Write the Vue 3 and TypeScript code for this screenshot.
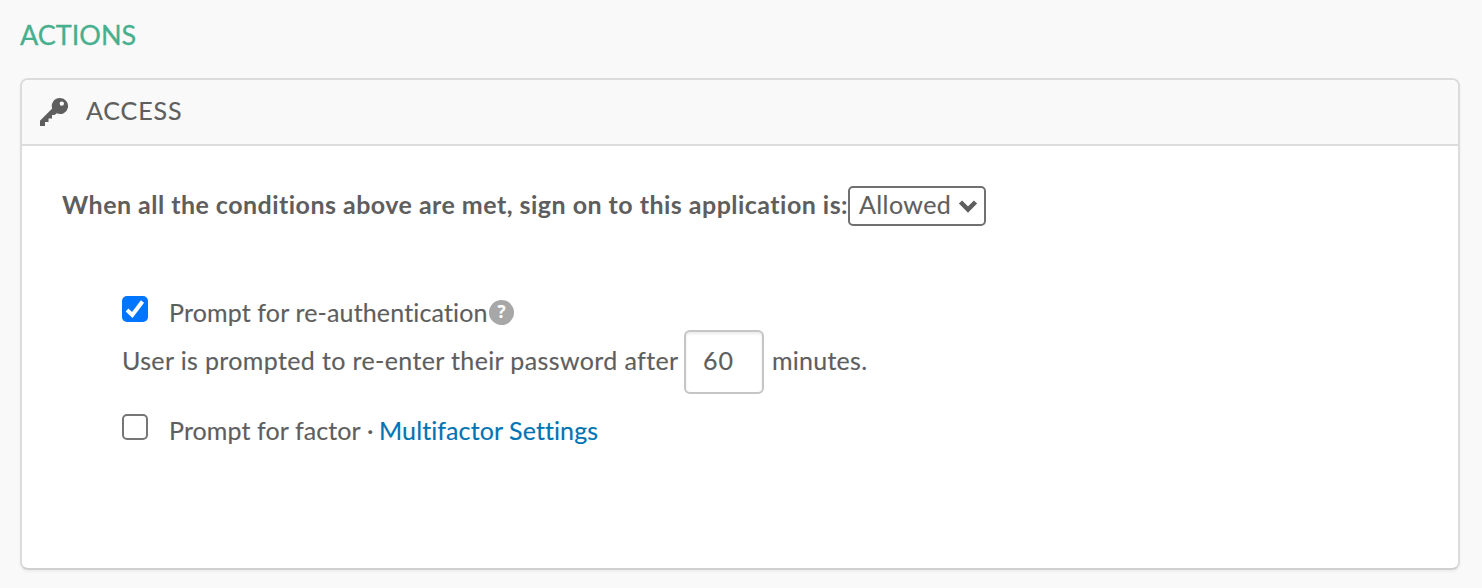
<script setup lang="ts">
import { ref } from 'vue'

const access = ref('Allowed')
const reauthenticate = ref(true)
const promptFactor = ref(false)
const minutes = ref('60')
</script>

<template>
  <main class="page">
    <h2 class="section-title">ACTIONS</h2>
    <section class="panel">
      <header class="panel-header">
        <svg class="key" viewBox="0 0 30 30" aria-hidden="true">
          <path fill-rule="evenodd" d="M21 1a8 8 0 1 1-3.200 15.300L15.500 18H13v3.500H9.500V25H6v4H1v-5.200L13.200 11.600A8 8 0 0 1 21 1Zm1.800 3.400a2.200 2.200 0 1 0 0 4.400 2.200 2.200 0 0 0 0-4.400Z" />
        </svg>
        <h3 class="panel-title">ACCESS</h3>
      </header>
      <div class="panel-body">
        <div class="access-row">
          <span class="access-label">When all the conditions above are met, sign on to this application is:</span>
          <button class="select" type="button">
            <span class="select-value">{{ access }}</span>
            <svg class="chevron" viewBox="0 0 20 14" aria-hidden="true"><path d="m2.500 3 7.500 7.500L17.500 3" /></svg>
          </button>
        </div>
        <div class="options">
          <div class="option">
            <button class="checkbox" :class="{ checked: reauthenticate }" type="button" role="checkbox" :aria-checked="reauthenticate" @click="reauthenticate = !reauthenticate">
              <svg v-if="reauthenticate" viewBox="0 0 26 26" aria-hidden="true"><path d="m5 14 5.300 5L20.500 5.500" /></svg>
            </button>
            <span class="reauth-text">Prompt for re-authentication</span>
            <span class="help">?</span>
          </div>
          <div class="duration">
            <span class="duration-text">User is prompted to re-enter their password after</span>
            <input v-model="minutes" class="minutes" type="text" />
            <span class="unit">minutes.</span>
          </div>
          <div class="option">
            <button class="checkbox" :class="{ checked: promptFactor }" type="button" role="checkbox" :aria-checked="promptFactor" @click="promptFactor = !promptFactor">
              <svg v-if="promptFactor" viewBox="0 0 26 26" aria-hidden="true"><path d="m5 14 5.300 5L20.500 5.500" /></svg>
            </button>
            <span class="factor-text">Prompt for factor</span>
            <span class="dot">·</span>
            <a class="link">Multifactor Settings</a>
          </div>
        </div>
      </div>
    </section>
  </main>
</template>

<style>
body {
  margin: 0;
  background: #f9f9f9;
}
</style>

<style scoped>
* {
  box-sizing: border-box;
}
.page {
  height: 588px;
  padding: 20px 22px 18px 20px;
  background: #f9f9f9;
  color: #5e5e5e;
  font-family: Lato, "Open Sans", sans-serif;
  font-size: 25px;
  font-variant-ligatures: none;
  line-height: 30px;
  white-space: nowrap;
  overflow: hidden;
  -webkit-text-stroke: 0.15px currentColor;
}
.section-title,
.panel-title {
  margin: 0;
  font-weight: 400;
}
.section-title {
  height: 58px;
  color: #46b08e;
  font-size: 27px;
  -webkit-text-stroke: 0.3px currentColor;
}
.panel {
  height: 492px;
  border: 2px solid #dcdcdc;
  border-bottom-color: #d0d0d0;
  border-radius: 8px;
  background: #fff;
  box-shadow: 0 2px 3px rgba(0, 0, 0, 0.05);
  overflow: hidden;
}
.panel-header {
  display: flex;
  align-items: center;
  height: 66px;
  padding-left: 17px;
  border-bottom: 2px solid #dcdcdc;
  background: #f9f9f9;
}
.key {
  width: 30px;
  height: 30px;
  margin-right: 17px;
  fill: #5e5e5e;
}
.panel-title {
  padding-bottom: 4px;
  font-size: 25px;
  letter-spacing: 0.9px;
}
.panel-body {
  padding: 40px;
}
.access-row {
  display: flex;
  align-items: center;
  height: 40px;
}
.access-label {
  width: 786px;
  padding-bottom: 4px;
  font-weight: 700;
  letter-spacing: 0.47px;
  -webkit-text-stroke: 0;
}
.select {
  display: flex;
  align-items: center;
  width: 138px;
  height: 40px;
  padding: 0 0 0 9px;
  border: 2px solid #707070;
  border-radius: 5px;
  background: #fff;
  color: inherit;
  font: inherit;
  font-variant-ligatures: none;
}
.select-value {
  width: 99px;
  padding-bottom: 4px;
  letter-spacing: 0.4px;
  text-align: left;
}
.chevron {
  width: 20px;
  height: 14px;
  fill: none;
  stroke: #5e5e5e;
  stroke-width: 4.500;
}
.options {
  margin: 70px 0 0 60px;
}
.option {
  display: flex;
  height: 34px;
}
.checkbox {
  width: 26px;
  height: 26px;
  margin-right: 21px;
  padding: 0;
  border: 2px solid #767676;
  border-radius: 5px;
  background: #fff;
}
.checkbox.checked {
  border: 0;
  background: #0075ff;
}
.checkbox svg {
  display: block;
  width: 26px;
  height: 26px;
  fill: none;
  stroke: #fff;
  stroke-width: 4;
}
.reauth-text,
.factor-text,
.dot,
.link {
  margin-top: 1px;
}
.reauth-text {
  width: 320px;
  letter-spacing: 0.15px;
}
.help {
  width: 25px;
  height: 25px;
  margin-top: 4px;
  border-radius: 50%;
  background: #a7a7a7;
  color: #fff;
  font: 700 17px/24px "Open Sans", sans-serif;
  text-align: center;
}
.duration {
  display: flex;
  align-items: center;
  height: 64px;
  margin-bottom: 20px;
}
.duration-text {
  width: 562px;
  padding-bottom: 4px;
  letter-spacing: 0.37px;
}
.minutes {
  width: 80px;
  height: 64px;
  margin-right: 8px;
  padding: 0 10px 4px 17px;
  border: 2px solid #c5c5c5;
  border-radius: 6px;
  outline: none;
  background: #fff;
  box-shadow: inset 0 2px 3px rgba(0, 0, 0, 0.08);
  color: inherit;
  font: inherit;
  letter-spacing: 0.9px;
}
.unit {
  padding-bottom: 4px;
  letter-spacing: 0.25px;
}
.factor-text {
  width: 198px;
  letter-spacing: 0.1px;
}
.dot {
  width: 12px;
}
.link {
  color: #0074b3;
  letter-spacing: 0.1px;
}
</style>
